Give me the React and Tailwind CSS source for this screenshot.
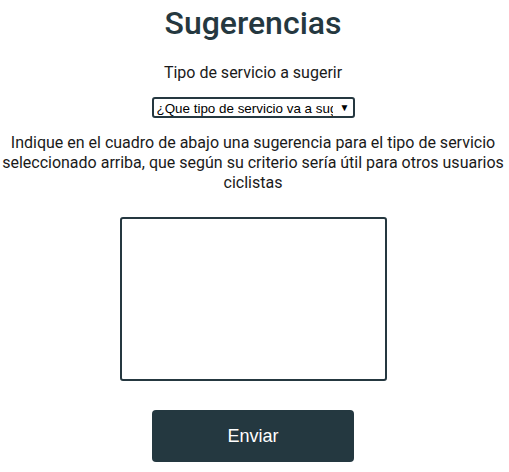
export default function App() {
  return (
    <div className="flex flex-col items-center bg-white pr-[3px] text-[#1a1a1a]" style={{ fontFamily: "Roboto, sans-serif" }}>
      <h1 className="mt-[3px] text-[32px] font-medium leading-[40px] text-[#253840]">Sugerencias</h1>
      <p className="mt-[20px] text-[16px] leading-[20px]">Tipo de servicio a sugerir</p>
      <div className="relative mt-[14px]">
        <select className="block h-[21px] w-[203px] appearance-none rounded-[3px] border-2 border-[#253840] bg-white pl-[3px] pr-[20px] text-[13.4px] font-['Liberation_Sans',Arial,sans-serif] text-black">
          <option>¿Que tipo de servicio va a sugerir?</option>
        </select>
        <span className="pointer-events-none absolute right-[5px] top-[3px] text-[10px] leading-[15px] text-black">▼</span>
      </div>
      <p className="mt-[15px] text-center text-[16px] leading-[20px]">
        Indique en el cuadro de abajo una sugerencia para el tipo de servicio seleccionado arriba, que según su criterio sería útil para otros usuarios ciclistas
      </p>
      <textarea className="mt-[24px] h-[164px] w-[267px] resize-none rounded-[3px] border-2 border-[#253840] bg-white" />
      <button className="mt-[29px] h-[52px] w-[202px] rounded-[4px] bg-[#243840] text-[18px] text-white font-['Liberation_Sans',Arial,sans-serif]">
        Enviar
      </button>
    </div>
  );
}
